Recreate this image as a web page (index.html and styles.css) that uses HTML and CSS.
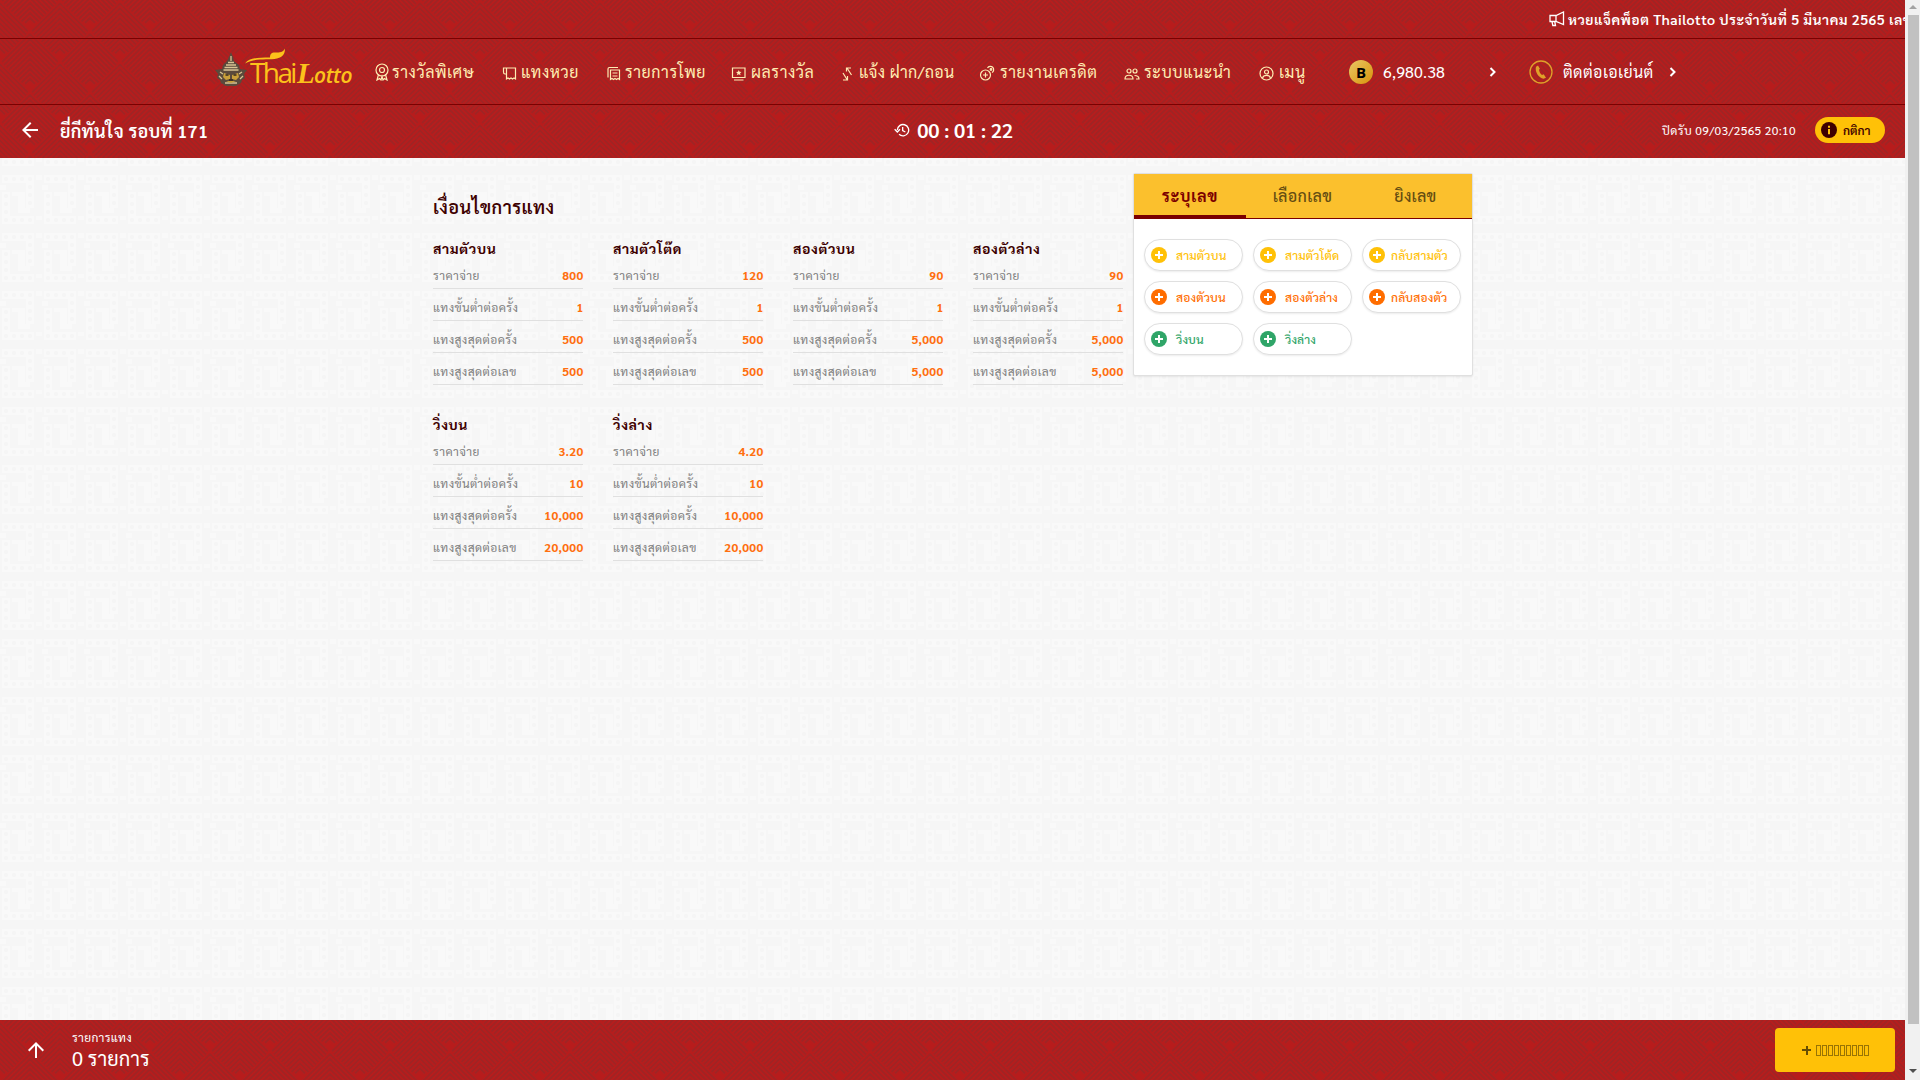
FILE: index.html
```html
<!DOCTYPE html>
<html lang="th">
<head>
<meta charset="utf-8">
<title>ThaiLotto</title>
<link rel="stylesheet" href="styles.css">
</head>
<body>
<div class="page">
  <div class="app">
    <header class="header">
      <div class="ticker">
        <svg class="ticker-icon" viewBox="0 0 16 16"><path d="M1 4.5h6L14.5 1v12.500L7 10.500H1zM7 4.500v6M3 10.500l.8 4h2.700l-.8-4"/></svg>
        <span>หวยแจ็คพ็อต Thailotto ประจำวันที่ 5 มีนาคม 2565 เลขท้าย</span>
      </div>
      <nav class="nav">
        <div class="logo">
          <svg viewBox="0 0 138 38" width="138" height="38">
            <path d="M15 3l2 5 1 4 5 4 1 4 7 1-3 4 1 4-3 2-1 3-5 3H10l-5-3-1-3-3-2 1-4-3-4 7-1 1-4 4-4 2-4z" fill="#5a4a3c"/>
            <path d="M15 7v5M12 13.500h6M10 16h10M8.500 18.500h13M7.500 21h15M4 23l3 2M26 23l-3 2M9 34h12M3 27l3 3M27 27l-3 3" stroke="#d8c493" stroke-width="1.300" fill="none"/>
            <path d="M8 24l6 2v4l-4 1-3-3zM22 24l-6 2v4l4 1 3-3zM10 32l5 2 5-2" fill="#c9a03a"/>
            <path d="M9.500 26h3M17.500 26h3M13 31h4" stroke="#33291f" stroke-width="1.300"/>
            <path d="M29 14.500c4-5.500 11-6 25-6 0-3 1-5 5-5 5 0 8 0 10-4 0 7-4 9-8 10-9 2-22-1-32 5z" fill="#fcc21b"/>
            <text y="34"><tspan x="34" class="logo-thai">Thai</tspan><tspan x="81" class="logo-l">L</tspan><tspan x="98" class="logo-otto">otto</tspan></text>
          </svg>
        </div>
        <a class="nav-item"><svg viewBox="0 0 16 18" class="ic w14"><circle cx="7" cy="7" r="6"/><circle cx="7" cy="7" r="2.500"/><path d="M3.500 11.500L2 17l2.500-1.500L6 17l1-3.500L8 17l1.500-1.500L12 17l-1.500-5.500"/></svg><span>รางวัลพิเศษ</span></a>
        <a class="nav-item bets-link"><svg viewBox="0 0 16 16" class="ic low"><path d="M4.500 12V3h9v11l-1.500-1-1.500 1L9 13l-1.500 1L6 13l-1.500 1zM4.500 9H3C1.500 9 1.500 8 1.500 7V3h4"/></svg><span>แทงหวย</span></a>
        <a class="nav-item bets-link"><svg viewBox="0 0 16 16" class="ic low"><path d="M4.500 5h9v9.500l-1.500-1-1.500 1-1.500-1-1.500 1-1.500-1-1.500 1zM2 12.500V4c0-1 .5-1.500 1.500-1.500H12M6.500 8h5M6.500 11h5"/></svg><span>รายการโพย</span></a>
        <a class="nav-item"><svg viewBox="0 0 16 16" class="ic low"><path d="M1.500 3h12.500v9.500H1.500zM3 15h9.500"/><path class="solid" d="M7.750 5l.8 1.800 2 .2-1.500 1.300.5 2-1.800-1-1.800 1 .5-2L5 7l2-.2z"/></svg><span>ผลรางวัล</span></a>
        <a class="nav-item transfer"><svg viewBox="0 0 16 16" class="ic low"><path d="M11.500 10L7 3M6.500 6.500V3h4.500M3 8l4 6.500M7.500 11v4H3"/></svg><span>แจ้ง ฝาก/ถอน</span></a>
        <a class="nav-item"><svg viewBox="0 0 17 16" class="ic low w17"><circle cx="6.500" cy="10" r="5"/><path d="M6.500 7.500v5M4 10h5M8.500 3a3.300 3.300 0 1 1 4.500 4.500"/><circle cx="12" cy="4.500" r=".8"/></svg><span>รายงานเครดิต</span></a>
        <a class="nav-item"><svg viewBox="0 0 16 16" class="ic low"><circle cx="5" cy="6" r="2"/><circle cx="11" cy="6" r="2"/><path d="M1 14c0-5 8-5 8 0zM10.500 10.500c3 0 4.500 1 4.500 3.500h-3"/></svg><span>ระบบแนะนำ</span></a>
        <a class="nav-item"><svg viewBox="0 0 16 16" class="ic low"><circle cx="7.500" cy="8.500" r="6.500"/><circle cx="7.500" cy="7" r="2"/><path d="M3.500 13c1-3.500 7-3.500 8 0"/></svg><span>เมนู</span></a>
        <a class="nav-item credit"><b class="coin">B</b><span>6,980.38</span><svg class="chev" viewBox="0 0 8 10"><path d="M1.500 1l4 4-4 4"/></svg></a>
        <a class="nav-item agent"><svg class="phone" viewBox="0 0 24 24"><circle cx="12" cy="12" r="11"/><path d="M9 5.500l-2 1.300c-1.500 5 3 11.500 7.500 12l2.500-1-2.300-3.500-1.700.7c-1.500-1-3-3.500-3-5.500L11 9z"/></svg><span>ติดต่อเอเย่นต์</span><svg class="chev" viewBox="0 0 8 10"><path d="M1.500 1l4 4-4 4"/></svg></a>
      </nav>
      <div class="titlebar">
        <div class="tb-left">
          <svg class="arrow" viewBox="0 0 24 24"><path d="M20 11H7.830l5.590-5.590L12 4l-8 8 8 8 1.410-1.410L7.830 13H20z"/></svg>
          <h1>ยี่กีทันใจ รอบที่ 171</h1>
        </div>
        <div class="tb-timer">
          <svg class="history" viewBox="0 0 24 24"><path d="M5 12a8.500 8.500 0 1 1 2.600 6.400M1 11l4 4 4-4M13 7.500V13l4 2"/></svg>
          <span>00 : 01 : 22</span>
        </div>
        <div class="tb-right">
          <span class="close-at">ปิดรับ 09/03/2565 20:10</span>
          <button class="rules"><svg viewBox="0 0 16 16"><circle cx="8" cy="8" r="8" fill="#3e0000"/><path d="M7 3.700h2v2H7zM7 7h2v5.300H7z" fill="#ffc107"/></svg><span>กติกา</span></button>
        </div>
      </div>
    </header>

    <main class="main">
      <section class="conditions">
        <h2>เงื่อนไขการแทง</h2>
        <div class="groups">
          <div class="group"><h3>สามตัวบน</h3><dl><div><dt>ราคาจ่าย</dt><dd>800</dd></div><div><dt>แทงขั้นต่ำต่อครั้ง</dt><dd>1</dd></div><div><dt>แทงสูงสุดต่อครั้ง</dt><dd>500</dd></div><div><dt>แทงสูงสุดต่อเลข</dt><dd>500</dd></div></dl></div>
          <div class="group"><h3>สามตัวโต๊ด</h3><dl><div><dt>ราคาจ่าย</dt><dd>120</dd></div><div><dt>แทงขั้นต่ำต่อครั้ง</dt><dd>1</dd></div><div><dt>แทงสูงสุดต่อครั้ง</dt><dd>500</dd></div><div><dt>แทงสูงสุดต่อเลข</dt><dd>500</dd></div></dl></div>
          <div class="group"><h3>สองตัวบน</h3><dl><div><dt>ราคาจ่าย</dt><dd>90</dd></div><div><dt>แทงขั้นต่ำต่อครั้ง</dt><dd>1</dd></div><div><dt>แทงสูงสุดต่อครั้ง</dt><dd>5,000</dd></div><div><dt>แทงสูงสุดต่อเลข</dt><dd>5,000</dd></div></dl></div>
          <div class="group"><h3>สองตัวล่าง</h3><dl><div><dt>ราคาจ่าย</dt><dd>90</dd></div><div><dt>แทงขั้นต่ำต่อครั้ง</dt><dd>1</dd></div><div><dt>แทงสูงสุดต่อครั้ง</dt><dd>5,000</dd></div><div><dt>แทงสูงสุดต่อเลข</dt><dd>5,000</dd></div></dl></div>
          <div class="group"><h3>วิ่งบน</h3><dl><div><dt>ราคาจ่าย</dt><dd>3.20</dd></div><div><dt>แทงขั้นต่ำต่อครั้ง</dt><dd>10</dd></div><div><dt>แทงสูงสุดต่อครั้ง</dt><dd>10,000</dd></div><div><dt>แทงสูงสุดต่อเลข</dt><dd>20,000</dd></div></dl></div>
          <div class="group"><h3>วิ่งล่าง</h3><dl><div><dt>ราคาจ่าย</dt><dd>4.20</dd></div><div><dt>แทงขั้นต่ำต่อครั้ง</dt><dd>10</dd></div><div><dt>แทงสูงสุดต่อครั้ง</dt><dd>10,000</dd></div><div><dt>แทงสูงสุดต่อเลข</dt><dd>20,000</dd></div></dl></div>
        </div>
      </section>
      <aside class="panel">
        <div class="tabs"><div class="tab active">ระบุเลข</div><div class="tab">เลือกเลข</div><div class="tab">ยิงเลข</div></div>
        <div class="bets">
          <button class="bet yellow"><i class="plus"></i><span>สามตัวบน</span></button>
          <button class="bet yellow"><i class="plus"></i><span>สามตัวโต้ด</span></button>
          <button class="bet yellow tight"><i class="plus"></i><span>กลับสามตัว</span></button>
          <button class="bet orange"><i class="plus"></i><span>สองตัวบน</span></button>
          <button class="bet orange"><i class="plus"></i><span>สองตัวล่าง</span></button>
          <button class="bet orange tight"><i class="plus"></i><span>กลับสองตัว</span></button>
          <button class="bet green"><i class="plus"></i><span>วิ่งบน</span></button>
          <button class="bet green"><i class="plus"></i><span>วิ่งล่าง</span></button>
        </div>
      </aside>
    </main>

    <footer class="footer">
      <svg class="up" viewBox="0 0 24 24"><path d="M11 20V7.830l-5.590 5.590L4 12l8-8 8 8-1.410 1.410L13 7.830V20z"/></svg>
      <div class="summary"><small>รายการแทง</small><strong>0 รายการ</strong></div>
      <button class="add"><i class="add-plus"></i><span class="glyphs"><i></i><i></i><i></i><i></i><i></i><i></i><i></i><i></i><i></i></span></button>
    </footer>
  </div>
  <div class="scrollbar"><i class="sb-up"></i><div class="thumb"></div><i class="sb-down"></i></div>
</div>
</body>
</html>
```
FILE: styles.css
```css
* { box-sizing: border-box; }
body { margin: 0; font-family: Sarabun, "Noto Sans Thai Looped", "Noto Sans", sans-serif; overflow: hidden; }
h1, h2, h3, dl, dd { margin: 0; }
button { font-family: inherit; border: 0; padding: 0; margin: 0; }
i { font-style: normal; }

.page { display: flex; width: 1920px; height: 1080px; }
.app {
  width: 1905px; display: flex; flex-direction: column; background-color: #f6f6f6;
  background-position: 0 1px;
  background-image: url("data:image/svg+xml,%3Csvg xmlns='http://www.w3.org/2000/svg' width='42' height='58'%3E%3Cg fill='%23f9f9f9'%3E%3Cpath d='M2 0h32v33h-8V8H2zM2 17h8v24h24v8H2zM12 17h13v16h5v5H18V21h-6zM0 10h6v5H0zM36 0h6v5h-6zM36 41h6v4h-6z'/%3E%3C/g%3E%3Cg fill='%23f5f5f5'%3E%3Ccircle cx='6' cy='4' r='2'/%3E%3Ccircle cx='14' cy='4' r='2'/%3E%3Ccircle cx='22' cy='4' r='2'/%3E%3Ccircle cx='30' cy='4' r='2'/%3E%3Ccircle cx='30' cy='12' r='2'/%3E%3Ccircle cx='30' cy='20' r='2'/%3E%3Ccircle cx='30' cy='28' r='2'/%3E%3Ccircle cx='6' cy='21' r='2'/%3E%3Ccircle cx='6' cy='29' r='2'/%3E%3Ccircle cx='6' cy='37' r='2'/%3E%3Ccircle cx='6' cy='45' r='2'/%3E%3Ccircle cx='14' cy='45' r='2'/%3E%3Ccircle cx='22' cy='45' r='2'/%3E%3Ccircle cx='30' cy='45' r='2'/%3E%3C/g%3E%3C/svg%3E");
}
.header, .footer {
  background-color: #b71c1c;
  background-image: url("data:image/svg+xml,%3Csvg xmlns='http://www.w3.org/2000/svg' width='60' height='61' viewBox='0 0 60 61'%3E%3Cdefs%3E%3Cg id='d' fill='none' stroke='%23a02424' stroke-width='1.800'%3E%3Cpath d='M-28 1L0-27 28 1M-26 4L0-22 26 4M-23.500 6.500L0-17 23.500 6.500M-21 9L0-12 21 9M-18.500 11.500L0-7 18.500 11.500M-16 14L0-2 16 14M-13.500 16.500L0 3 13.500 16.500M-11 19L0 8 11 19M-8.500 21.500L0 13 8.500 21.500M-5 23L0 18 5 23'/%3E%3C/g%3E%3C/defs%3E%3Cuse href='%23d' x='30'/%3E%3Cuse href='%23d' x='30' y='61'/%3E%3Cuse href='%23d' x='0' y='30.500'/%3E%3Cuse href='%23d' x='60' y='30.500'/%3E%3C/svg%3E");
}
.header { height: 158px; color: #fff; }

.ticker { height: 39px; border-bottom: 1px solid #7b0000; display: flex; align-items: center; padding-left: 1549px; overflow: hidden; white-space: nowrap; font-size: 14px; font-weight: 600; letter-spacing: .5px; }
.ticker-icon { width: 16px; height: 16px; margin-right: 3px; flex: none; fill: none; stroke: #fff; stroke-width: 1.300; }

.nav { height: 66px; border-bottom: 1px solid #7b0000; display: grid; grid-template-columns: 159px 127px 104px 125px 109px 139px 145px 135px 90px 180px 160px; padding-left: 216px; align-items: center; font-size: 16px; color: #ffecb3; font-weight: 400; letter-spacing: .55px; }
.logo { height: 46px; letter-spacing: 0; }
.logo svg { display: block; overflow: visible; }
.logo text { fill: #fcc21b; }
.logo .logo-thai { font: 28px "Open Sans", sans-serif; letter-spacing: -2.600px; }
.logo .logo-l { font: italic 700 29px "Liberation Serif", serif; }
.logo .logo-otto { font: italic 600 21px "Open Sans", sans-serif; letter-spacing: -.4px; }
.nav-item { display: flex; align-items: center; white-space: nowrap; }
.nav-item.bets-link .ic { margin-right: 3px; }
.nav-item.transfer { letter-spacing: .35px; }
.transfer .ic { margin-right: 3px; }
.ic { width: 16px; height: 16px; margin-right: 4px; flex: none; fill: none; stroke: #ffecb3; stroke-width: 1.200; }
.ic.w14 { width: 16px; height: 18px; margin-right: 1px; }
.ic.w17 { width: 17px; }
.ic.low { margin-top: 3px; }
.ic .solid { fill: #ffecb3; stroke: none; }
.credit, .agent { color: #fff; letter-spacing: .4px; }
.credit { letter-spacing: .15px; }
.coin { width: 24px; height: 24px; border-radius: 50%; background: linear-gradient(135deg, #e8c766, #d9930a); color: #000; font: 700 15px/24px "Open Sans", sans-serif; text-align: center; margin-right: 10px; }
.chev { width: 8px; height: 10px; fill: none; stroke: #fff; stroke-width: 2; }
.credit .chev { margin-left: auto; margin-right: 32px; }
.agent .chev { margin-left: 15px; }
.phone { width: 24px; height: 24px; margin-right: 10px; fill: #dfa12a; }
.phone circle { fill: none; stroke: #dfa12a; stroke-width: 1.300; }

.titlebar { height: 50px; display: grid; grid-template-columns: 1fr auto 1fr; align-items: center; padding: 0 20px 0 18px; }
.tb-left { display: flex; align-items: center; }
.arrow { width: 24px; height: 24px; fill: #fff; margin-right: 18px; }
h1 { font-size: 18px; font-weight: 600; letter-spacing: .25px; }
.tb-timer { display: flex; align-items: center; font-size: 20px; font-weight: 600; letter-spacing: -.15px; padding-left: 4px; }
.history { width: 16px; height: 16px; fill: none; stroke: #fff; stroke-width: 2; margin-right: 7px; }
.tb-right { display: flex; align-items: center; justify-content: flex-end; }
.close-at { font-size: 12px; letter-spacing: .35px; margin-right: 19px; }
.rules { width: 70px; height: 26px; border-radius: 13px; background: #ffc107; color: #3e0000; display: flex; align-items: center; padding-left: 6px; font-size: 12px; font-weight: 600; }
.rules svg { width: 16px; height: 16px; margin-right: 6px; }

.main { flex: 1; display: flex; align-items: flex-start; padding: 15px 0 0 433px; }
.conditions { width: 700px; padding-top: 20px; }
h2 { font-size: 18px; line-height: 28px; font-weight: 600; color: #3e0000; letter-spacing: .5px; }
.groups { display: grid; grid-template-columns: repeat(4, 150px); column-gap: 30px; padding-top: 13px; }
.group { height: 176px; }
h3 { font-size: 14px; line-height: 22px; font-weight: 700; letter-spacing: .65px; color: #3e0000; padding-top: 3px; height: 33px; }
dl > div { display: flex; justify-content: space-between; align-items: flex-end; border-bottom: 1px solid #e0e0e0; font-size: 12px; line-height: 18px; height: 32px; padding-bottom: 4px; }
dl > div:first-child { height: 23px; margin-top: -1px; }
dt { color: #808080; letter-spacing: .4px; }
dd { color: #ff6f10; font-weight: 700; letter-spacing: .3px; margin-right: -.5px; }

.panel { width: 340px; height: 203px; background: #fff; border: 1px solid #e0e0e0; border-radius: 2px; box-shadow: 0 1px 2px rgba(0,0,0,.08); }
.tabs { display: flex; height: 45px; background: #fbc02d; border-bottom: 1px solid #7b0000; }
.tab { flex: 1; text-align: center; line-height: 43px; height: 45px; font-size: 16px; font-weight: 500; letter-spacing: .3px; color: #654d12; }
.tab.active { flex: none; width: 112px; color: #7b0000; font-weight: 700; letter-spacing: .7px; border-bottom: 4px solid #7b0000; }
.bets { display: grid; grid-template-columns: repeat(3, 99px); gap: 10px; padding: 20px 10px; }
.bet { height: 32px; border: 1px solid #e0e0e0; border-radius: 16px; background: #fff; box-shadow: 0 1px 2px rgba(0,0,0,.08); display: flex; align-items: center; padding-left: 6px; font-size: 12px; font-weight: 500; letter-spacing: .15px; color: var(--c); white-space: nowrap; }
.plus { width: 16px; height: 16px; border-radius: 50%; margin-right: 9px; background: linear-gradient(#fff, #fff) center / 8px 2px no-repeat, linear-gradient(#fff, #fff) center / 2px 8px no-repeat, var(--c); }
.tight .plus { margin-right: 6px; }
.yellow { --c: #ffc107; }
.orange { --c: #ff6d00; }
.green { --c: #2fa568; }

.footer { height: 60px; display: flex; align-items: center; padding: 0 10px 0 24px; color: #fff; }
.up { width: 24px; height: 24px; fill: #fff; margin-right: 24px; }
.summary { display: flex; flex-direction: column; flex: 1; }
.summary small { font-size: 12px; line-height: 17px; letter-spacing: .3px; }
.summary strong { font-size: 20px; line-height: 25px; font-weight: 400; }
.add { width: 120px; height: 44px; border-radius: 4px; background: #ffc107; display: flex; align-items: center; padding-left: 27px; }
.add-plus { width: 9px; height: 9px; margin-right: 5px; background: linear-gradient(#664d03, #664d03) center / 9px 2px no-repeat, linear-gradient(#664d03, #664d03) center / 2px 9px no-repeat; }
.glyphs { display: flex; gap: 1px; }
.glyphs i { width: 5px; height: 11px; border: 1px solid #997404; }

.scrollbar { width: 15px; background: #f1f1f1; display: flex; flex-direction: column; align-items: center; padding: 5px 0 7px 1px; }
.sb-up { border: 4px solid transparent; border-top: 0; border-bottom-color: #a3a3a3; margin-bottom: 6px; }
.thumb { width: 11px; height: 1009px; background: #c1c1c1; }
.sb-down { border: 4px solid transparent; border-bottom: 0; border-top-color: #505050; margin-top: auto; }
```
